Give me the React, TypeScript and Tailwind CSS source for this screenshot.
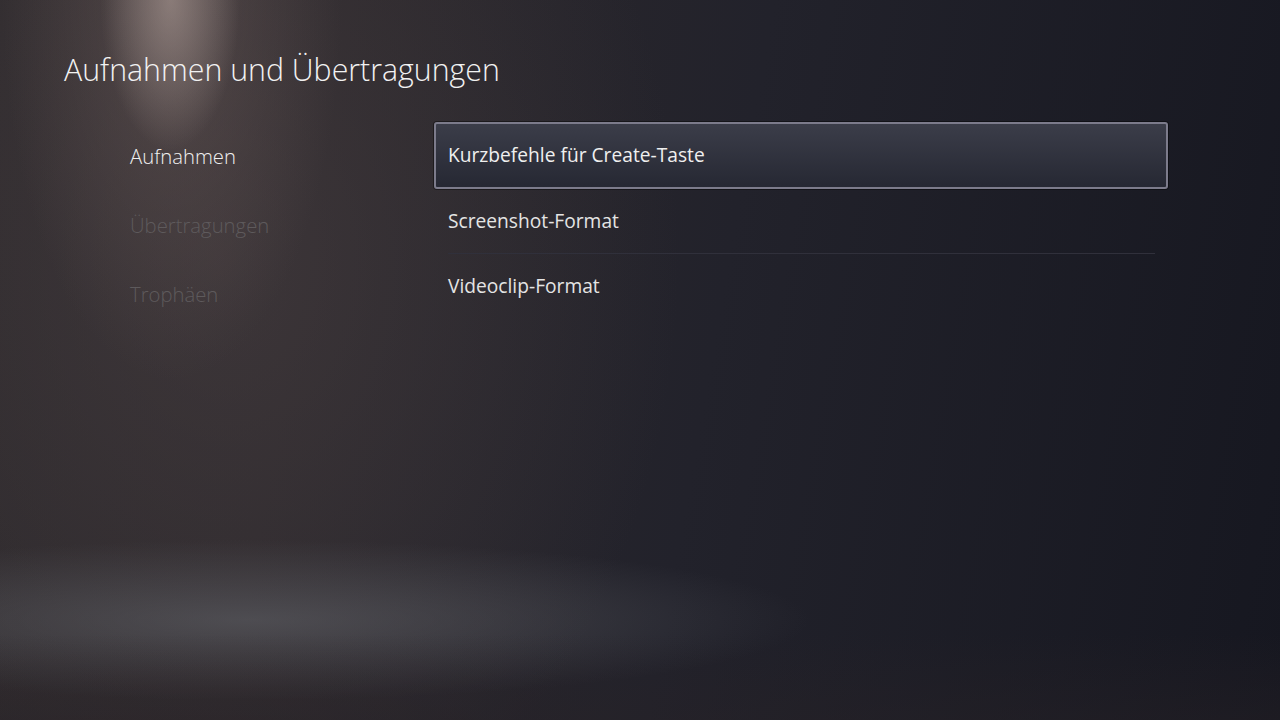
export default function App() {
  const sections = [
    { label: "Aufnahmen", active: true },
    { label: "Übertragungen", active: false },
    { label: "Trophäen", active: false },
  ];
  const options = ["Kurzbefehle für Create-Taste", "Screenshot-Format", "Videoclip-Format"];

  return (
    <div
      className="relative h-[720px] w-[1280px] overflow-hidden bg-[#1b1b24] text-white"
      style={{ fontFamily: '"Open Sans", "Noto Sans", sans-serif' }}
    >
      {/* background layers */}
      <div className="absolute inset-0 bg-[linear-gradient(100deg,#2e2a2d_0%,#2c282c_25%,#22222b_55%,#161720_100%)]" />
      <div className="absolute inset-0 bg-[radial-gradient(ellipse_460px_620px_at_220px_260px,rgba(80,70,72,0.45)_0%,rgba(0,0,0,0)_100%)]" />
      <div className="absolute inset-0 bg-[radial-gradient(ellipse_170px_380px_at_172px_0px,rgba(150,132,128,0.55)_0%,rgba(110,94,92,0.3)_40%,rgba(0,0,0,0)_100%)]" />
      <div className="absolute inset-0 bg-[radial-gradient(ellipse_70px_150px_at_170px_0px,rgba(175,158,152,0.45)_0%,rgba(0,0,0,0)_100%)]" />
      <div className="absolute inset-0 bg-[radial-gradient(ellipse_560px_80px_at_250px_620px,rgba(100,102,108,0.55)_0%,rgba(0,0,0,0)_100%)]" />
      <div className="absolute inset-0 bg-[linear-gradient(180deg,rgba(0,0,0,0)_88%,rgba(40,34,38,0.4)_100%)]" />

      <div className="relative">
        <h1 className="pl-16 pt-[50px] text-[30.3px] font-light leading-10 text-[#f2f2f2]">
          Aufnahmen und Übertragungen
        </h1>

        <div className="mt-[32px] flex">
          <ul className="w-[434px] pl-[130px]">
            {sections.map((s) => (
              <li
                key={s.label}
                className={`flex h-[69px] items-center text-[20.3px] font-light ${
                  s.active ? "text-[#f0f0f0]" : "text-[#5e5a5c]"
                }`}
              >
                {s.label}
              </li>
            ))}
          </ul>

          <ul className="w-[734px]">
            {options.map((o, i) => (
              <li key={o}>
                {i === 0 ? (
                  <div className="flex h-[67px] items-center rounded-[3px] border-2 border-[#7c7b8b] bg-[linear-gradient(180deg,#3b3d49_0%,#262833_100%)] pb-px pl-[12px] text-[19.2px] text-[#efefef] shadow-[0_0_0_1px_rgba(0,0,0,0.4)]">
                    {o}
                  </div>
                ) : (
                  <div className="ml-[14px] mr-[13px]">
                    <div className="flex h-[64px] items-center pt-px text-[19.2px] text-[#e4e4e4]">{o}</div>
                    {i === 1 && <div className="h-px bg-[#30303b]" />}
                  </div>
                )}
              </li>
            ))}
          </ul>
        </div>
      </div>
    </div>
  );
}
